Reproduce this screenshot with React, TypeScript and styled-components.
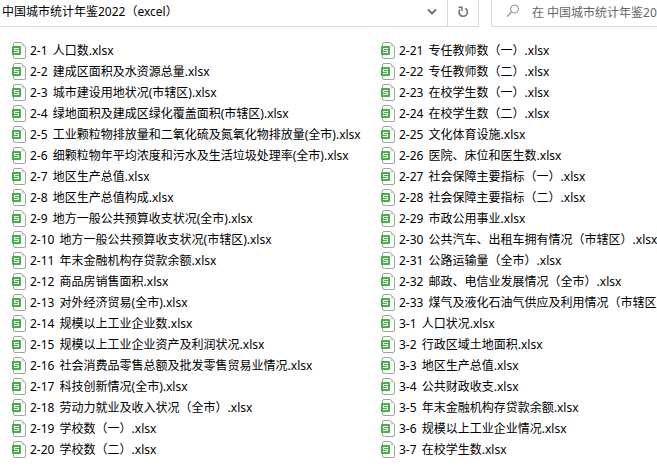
import React from "react";
import styled, { createGlobalStyle } from "styled-components";

const GlobalStyle = createGlobalStyle`
  *, *::before, *::after { box-sizing: border-box; }
  body {
    margin: 0;
    background: #fff;
    color: #000;
    font: 12px/20px "Noto Sans", "Noto Sans CJK SC", sans-serif;
    overflow: hidden;
  }
`;

const Toolbar = styled.header`
  display: flex;
  height: 27px;
`;

const AddressBar = styled.div`
  display: flex;
  flex: 1;
  min-width: 0;
  border-bottom: 1px solid #d9d9d9;
`;

const AddressInput = styled.input`
  flex: 1;
  min-width: 0;
  height: 22px;
  padding: 0 2px;
  border: 0;
  outline: 0;
  background: none;
  color: #000;
  font: inherit;
`;

const BarButton = styled.button<{ $divided?: boolean }>`
  display: grid;
  place-items: center;
  width: ${(p) => (p.$divided ? 32 : 30)}px;
  height: 26px;
  padding: 0 0 2px;
  border: 0 solid #d9d9d9;
  border-width: ${(p) => (p.$divided ? "0 1px" : "0")};
  background: none;
  color: #737373;
`;

const SearchBox = styled.label`
  display: flex;
  flex: 0 0 166px;
  min-width: 0;
  margin-left: 12px;
  padding-left: 14px;
  gap: 12px;
  border: solid #d9d9d9;
  border-width: 0 0 1px 1px;
  color: #8c8c8c;

  svg {
    flex: none;
    margin-top: 4px;
  }
`;

const SearchInput = styled.input`
  flex: 1;
  min-width: 0;
  height: 24px;
  padding: 0;
  border: 0;
  outline: 0;
  background: none;
  font: inherit;

  &::placeholder {
    color: #666;
    opacity: 1;
  }
`;

const FileList = styled.ul`
  display: grid;
  grid-auto-flow: column;
  grid-template-rows: repeat(20, 21px);
  grid-auto-columns: 369px;
  margin: 0;
  padding: 13px 0 9px 11px;
  list-style: none;
  overflow: hidden;
`;

const FileLink = styled.a`
  display: flex;
  align-items: center;
  gap: 4px;
  height: 21px;
  color: inherit;
  text-decoration: none;
  white-space: nowrap;

  svg {
    flex: none;
  }
`;

const FileNumber = styled.span`
  margin-right: 2px;
`;

const SheetIcon = () => (
  <svg width="15" height="17" viewBox="0 0 15 17" aria-hidden="true">
    <path
      d="M4 .5H10.5L14.5 4.5V15A1.5 1.5 0 0 1 13 16.5H4A1.5 1.5 0 0 1 2.5 15V2A1.5 1.5 0 0 1 4 .5Z"
      fill="#fff"
      stroke="#a3a3a3"
    />
    <path d="M10.5 1V4.5H14Z" fill="#d4d4d4" />
    <rect x="1" y="4" width="9" height="9" rx="1" fill="#45b049" />
    <path d="M8 6.5H3.5V8.5H7.5V10.5H3" fill="none" stroke="#fff" />
  </svg>
);

const ChevronIcon = () => (
  <svg width="10" height="8" viewBox="0 0 10 8" aria-hidden="true">
    <path d="M1 1.5L5 5.5L9 1.5" fill="none" stroke="currentColor" strokeWidth="2" />
  </svg>
);

const RefreshIcon = () => (
  <svg width="12" height="12" viewBox="0 0 12 12" aria-hidden="true">
    <path d="M8.2 2.4A4.2 4.2 0 1 1 3 3.4" fill="none" stroke="currentColor" strokeWidth="1.6" />
    <path d="M1.5 1.3H5V5" fill="none" stroke="currentColor" strokeWidth="1.4" />
  </svg>
);

const SearchIcon = () => (
  <svg width="14" height="14" viewBox="0 0 14 14" aria-hidden="true">
    <circle cx="8.5" cy="5" r="4" fill="none" stroke="currentColor" />
    <path d="M5.6 7.9L1 12.6" fill="none" stroke="currentColor" strokeWidth="1.2" />
  </svg>
);

const files: [string, string][] = [
  ["2-1", "人口数"],
  ["2-2", "建成区面积及水资源总量"],
  ["2-3", "城市建设用地状况(市辖区)"],
  ["2-4", "绿地面积及建成区绿化覆盖面积(市辖区)"],
  ["2-5", "工业颗粒物排放量和二氧化硫及氮氧化物排放量(全市)"],
  ["2-6", "细颗粒物年平均浓度和污水及生活垃圾处理率(全市)"],
  ["2-7", "地区生产总值"],
  ["2-8", "地区生产总值构成"],
  ["2-9", "地方一般公共预算收支状况(全市)"],
  ["2-10", "地方一般公共预算收支状况(市辖区)"],
  ["2-11", "年末金融机构存贷款余额"],
  ["2-12", "商品房销售面积"],
  ["2-13", "对外经济贸易(全市)"],
  ["2-14", "规模以上工业企业数"],
  ["2-15", "规模以上工业企业资产及利润状况"],
  ["2-16", "社会消费品零售总额及批发零售贸易业情况"],
  ["2-17", "科技创新情况(全市)"],
  ["2-18", "劳动力就业及收入状况（全市）"],
  ["2-19", "学校数（一）"],
  ["2-20", "学校数（二）"],
  ["2-21", "专任教师数（一）"],
  ["2-22", "专任教师数（二）"],
  ["2-23", "在校学生数（一）"],
  ["2-24", "在校学生数（二）"],
  ["2-25", "文化体育设施"],
  ["2-26", "医院、床位和医生数"],
  ["2-27", "社会保障主要指标（一）"],
  ["2-28", "社会保障主要指标（二）"],
  ["2-29", "市政公用事业"],
  ["2-30", "公共汽车、出租车拥有情况（市辖区）"],
  ["2-31", "公路运输量（全市）"],
  ["2-32", "邮政、电信业发展情况（全市）"],
  ["2-33", "煤气及液化石油气供应及利用情况（市辖区）"],
  ["3-1", "人口状况"],
  ["3-2", "行政区域土地面积"],
  ["3-3", "地区生产总值"],
  ["3-4", "公共财政收支"],
  ["3-5", "年末金融机构存贷款余额"],
  ["3-6", "规模以上工业企业情况"],
  ["3-7", "在校学生数"],
];

export default function App() {
  return (
    <>
      <GlobalStyle />
      <Toolbar>
        <AddressBar>
          <AddressInput aria-label="地址" defaultValue="中国城市统计年鉴2022（excel）" />
          <BarButton type="button" aria-label="展开">
            <ChevronIcon />
          </BarButton>
          <BarButton type="button" aria-label="刷新" $divided>
            <RefreshIcon />
          </BarButton>
        </AddressBar>
        <SearchBox>
          <SearchIcon />
          <SearchInput aria-label="搜索" placeholder="在 中国城市统计年鉴2022" />
        </SearchBox>
      </Toolbar>
      <main>
        <FileList>
          {files.map(([number, title]) => (
            <li key={number}>
              <FileLink href="#">
                <SheetIcon />
                <span>
                  <FileNumber>{number}</FileNumber> {title}.xlsx
                </span>
              </FileLink>
            </li>
          ))}
        </FileList>
      </main>
    </>
  );
}
